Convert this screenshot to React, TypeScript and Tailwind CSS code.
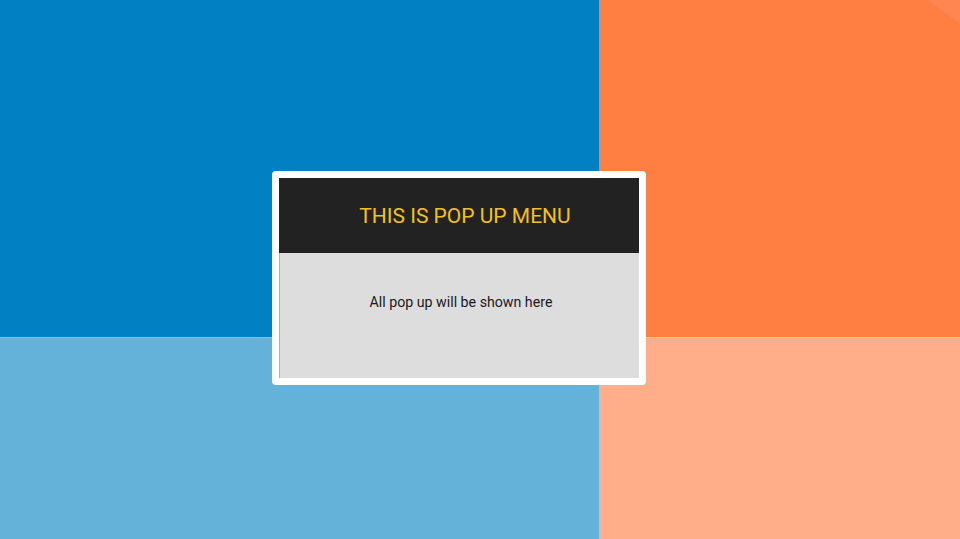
export default function App() {
  return (
    <div className="relative h-screen w-full overflow-hidden" style={{ fontFamily: "Roboto, 'Liberation Sans', sans-serif" }}>
      <div className="grid h-full w-full grid-cols-[599px_1fr] grid-rows-[337px_1fr]">
        <div className="bg-[#0180c3]" />
        <div className="relative overflow-hidden bg-[#ff7f43]">
          <div className="absolute right-0 top-0 h-[24px] w-[32px] bg-[#ff8650] [clip-path:polygon(0_0,100%_0,100%_100%)]" />
        </div>
        <div className="border-t border-[#7fc0e2] bg-[#64b2da]" />
        <div className="border-t border-[#ffc0a3] bg-[#ffae89]" />
      </div>

      <div className="absolute left-[272px] top-[171px] w-[374px] rounded-[4px] bg-white p-[7px]">
        <div className="flex h-[75px] items-center justify-center bg-[#222222] pl-[12px] pt-[2px]">
          <span className="text-[21px] text-[#f2c21b]">THIS IS POP UP MENU</span>
        </div>
        <div className="flex h-[125px] justify-center border-l border-[#9ab7c8] bg-[#dddddd] pl-[3px] pt-[39px]">
          <span className="text-[14.2px] text-[#1a1a1a]">All pop up will be shown here</span>
        </div>
      </div>
    </div>
  );
}
